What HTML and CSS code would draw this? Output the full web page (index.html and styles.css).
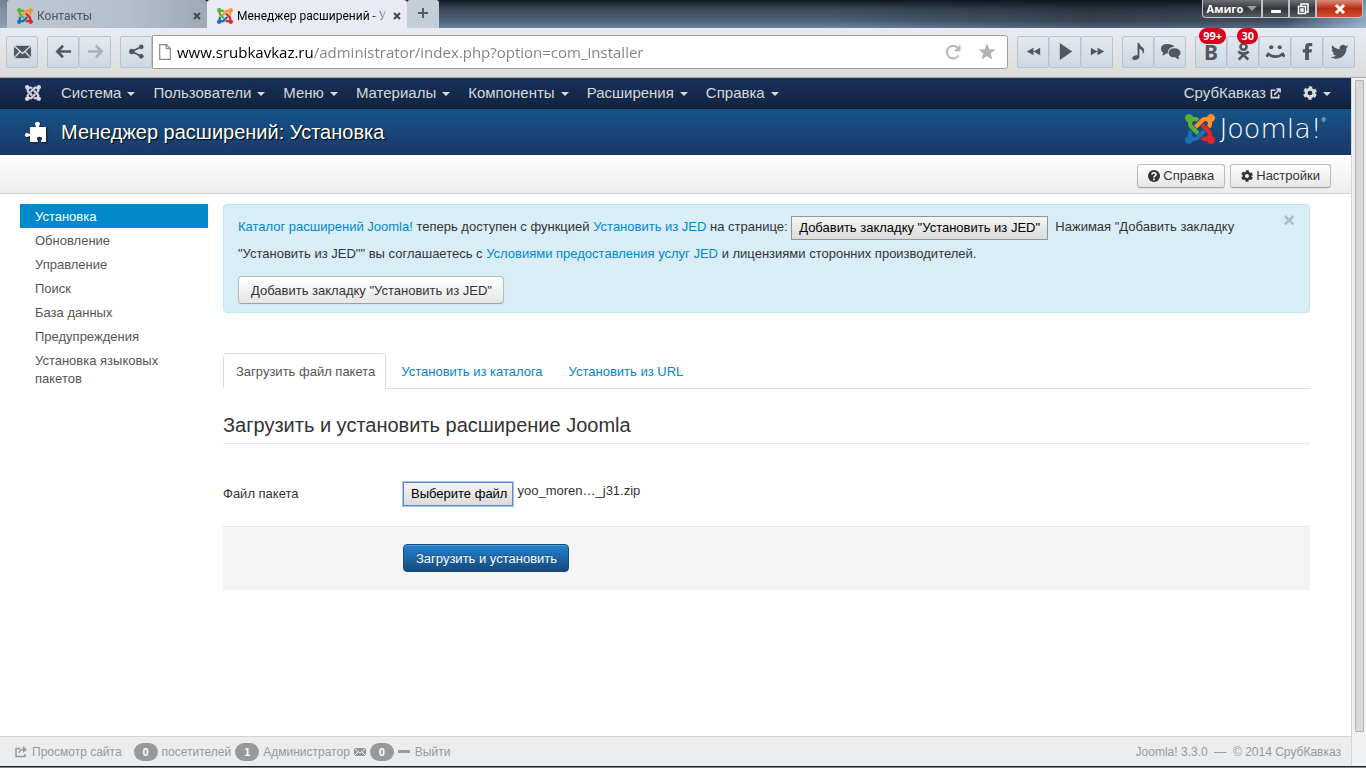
FILE: index.html
```html
<!DOCTYPE html>
<html lang="ru">
<head>
    <meta charset="UTF-8">
    <meta name="viewport" content="width=device-width, initial-scale=1.0">
    <title>Менеджер расширений - Установка</title>
    <link rel="stylesheet" href="styles.css">
</head>
<body>
    <!-- shared icons -->
    <svg class="defs" aria-hidden="true">
        <defs>
            <path id="arm" d="M16.719 14.759L14.22 17.26l-2.37 2.37-.462.466c-1.368 1.365-3.297 1.83-5.047 1.397-.327 1.424-1.604 2.49-3.13 2.49C1.438 23.983 0 22.547 0 20.772c0-1.518 1.055-2.789 2.469-3.123-.446-1.76.016-3.705 1.396-5.08l.179-.18 2.37 2.37-.184.181c-.769.779-.769 2.024 0 2.789.771.78 2.022.78 2.787 0l.465-.465 2.367-2.371 2.502-2.506z"/>
            <symbol id="joomla-color" viewBox="0 0 24 24">
                <use href="#arm" fill="#1a6fb5"/>
                <use href="#arm" fill="#e42626" transform="rotate(-90 12 12)"/>
                <use href="#arm" fill="#fd9326" transform="rotate(180 12 12)"/>
                <use href="#arm" fill="#5fb02e" transform="rotate(90 12 12)"/>
            </symbol>
            <symbol id="joomla" viewBox="0 0 24 24">
                <use href="#arm"/>
                <use href="#arm" transform="rotate(-90 12 12)"/>
                <use href="#arm" transform="rotate(180 12 12)"/>
                <use href="#arm" transform="rotate(90 12 12)"/>
            </symbol>
            <symbol id="gear" viewBox="0 0 16 16">
                <circle cx="8" cy="8" r="4.4" fill="none" stroke="currentColor" stroke-width="3.4"/>
                <circle cx="8" cy="8" r="6.6" fill="none" stroke="currentColor" stroke-width="2.4" stroke-dasharray="3.900 3.012" stroke-dashoffset="-1.500" transform="rotate(-2 8 8)"/>
            </symbol>
        </defs>
    </svg>

    <div class="titlebar">
        <div class="tabs">
            <div class="tab">
                <svg class="favicon"><use href="#joomla-color"/></svg>
                <span class="tab-title">Контакты</span>
                <button class="tab-close" aria-label="Закрыть"><svg viewBox="0 0 8 8"><path d="M1 1l6 6M7 1L1 7"/></svg></button>
            </div>
            <div class="tab tab-active">
                <svg class="favicon"><use href="#joomla-color"/></svg>
                <span class="tab-title">Менеджер расширений - У</span>
                <button class="tab-close" aria-label="Закрыть"><svg viewBox="0 0 8 8"><path d="M1 1l6 6M7 1L1 7"/></svg></button>
            </div>
            <button class="tab-new" aria-label="Новая вкладка"><svg viewBox="0 0 10 10"><path d="M5 0v10M0 5h10"/></svg></button>
        </div>
        <div class="window-buttons">
            <button class="win win-menu">Амиго <span class="win-arrow"></span></button>
            <button class="win" aria-label="Свернуть"><svg viewBox="0 0 14 14"><path d="M2 8h10v3H2z" fill="#fff"/></svg></button>
            <button class="win" aria-label="Развернуть"><svg viewBox="0 0 14 14"><path d="M5 4V2h7v8h-2M2.500 4.500h7v7h-7zM5 7h2v2H5z" fill="none" stroke="#fff" stroke-width="1.500"/></svg></button>
            <button class="win win-close" aria-label="Закрыть окно"><svg viewBox="0 0 14 14"><path d="M3 3l8 8M11 3l-8 8" stroke="#fff" stroke-width="3"/></svg></button>
        </div>
    </div>

    <div class="toolbar">
        <div class="group">
            <button class="tool" aria-label="Почта"><svg viewBox="0 0 20 20"><path d="M1 4h18v13H1z"/><path d="M1 4l9 8 9-8M1 17l6.500-7M19 17l-6.500-7" fill="none" stroke="#dfe4ec" stroke-width="1.400"/></svg></button>
        </div>
        <div class="group">
            <button class="tool" aria-label="Назад"><svg viewBox="0 0 20 20"><path d="M18 10H4M9.500 4l-6 6 6 6" class="line"/></svg></button>
            <button class="tool tool-off" aria-label="Вперёд"><svg viewBox="0 0 20 20"><path d="M2 10h14M10.500 4l6 6-6 6" class="line"/></svg></button>
        </div>
        <div class="address-group">
            <button class="tool" aria-label="Поделиться"><svg viewBox="0 0 20 20"><path d="M15 5L5 10l10 5" class="line thin"/><circle cx="15" cy="5" r="2.500"/><circle cx="5" cy="10" r="2.800"/><circle cx="15" cy="15" r="2.500"/></svg></button>
            <div class="address">
                <svg class="page-icon" viewBox="0 0 12 16"><path d="M.7.7h6.800L11.300 4.500v10.800H.7zM7.300.7v4h4" fill="#fff" stroke="#8a8a8a" stroke-width="1.200"/></svg>
                <input class="url" type="text" aria-label="Адрес" value="www.srubkavkaz.ru/administrator/index.php?option=com_installer">
                <button class="plain" aria-label="Обновить"><svg viewBox="0 0 18 18"><path d="M14.500 12.500A6.300 6.300 0 1 1 14 5" fill="none" stroke="#b7bbc0" stroke-width="2.200"/><path d="M16.500 1.500v6.700H9.800z" fill="#b7bbc0"/></svg></button>
                <button class="plain" aria-label="В закладки"><svg viewBox="0 0 18 18"><path d="M9 .5l2.300 5.700 6.200.4-4.800 4 1.600 6L9 13.200l-5.300 3.400 1.600-6L.5 6.600l6.200-.4z" fill="#aeb2b8"/></svg></button>
            </div>
        </div>
        <div class="group">
            <button class="tool" aria-label="Предыдущий"><svg viewBox="0 0 20 20"><path d="M10 6v8l-7-4zM17 6v8l-7-4z"/></svg></button>
            <button class="tool" aria-label="Играть"><svg viewBox="0 0 20 20"><path d="M4 1l13 9-13 9z"/></svg></button>
            <button class="tool" aria-label="Следующий"><svg viewBox="0 0 20 20"><path d="M3 6v8l7-4zM10 6v8l7-4z"/></svg></button>
        </div>
        <div class="group">
            <button class="tool" aria-label="Музыка"><svg viewBox="0 0 20 20"><path d="M9 1h2c0 4 5 4 5 8 0 2-1 3-2 4 1-4-1-5-3-6v8c0 3-3 4-5 4-1.500 0-3-1-2.500-2.500C4 14.500 7 13.500 9 14z"/></svg></button>
            <button class="tool" aria-label="Сообщения"><svg class="wide" viewBox="0 0 22 20"><path d="M7.500 2C3.500 2 1 4 1 7c0 2 1 3.200 2 4 0 1 0 2-1 3 2 0 3.500-1 4-2h2C8 8 11 5 15 5c-1-2-4-3-7.500-3z"/><path d="M15 6.500c-4 0-6 2-6 4.700s2 4.800 6 4.800h1c1 1.200 2.500 2 4.500 2-1-1-1.200-2-1-3 1.300-1 2-2.200 2-3.800 0-2.700-2.500-4.700-6.500-4.700z"/></svg></button>
        </div>
        <div class="group">
            <button class="tool" aria-label="ВКонтакте"><span class="letter">B</span><span class="count">99+</span></button>
            <button class="tool" aria-label="Одноклассники"><svg viewBox="0 0 20 20"><circle cx="10" cy="5" r="3.200" class="line"/><path d="M4.500 10c3 3 8 3 11 0M5 18.500l5-5 5 5" class="line"/></svg><span class="count">30</span></button>
            <button class="tool" aria-label="Мой Мир"><svg viewBox="0 0 20 20"><circle cx="5.500" cy="5.500" r="2.200"/><circle cx="14.500" cy="5.500" r="2.200"/><path d="M2 12c4 4.500 12 4.500 16 0M.5 15.500l2.500-4M19.500 15.500l-2.500-4" class="line"/></svg></button>
            <button class="tool" aria-label="Facebook"><svg viewBox="0 0 20 20"><path d="M7.500 19v-8H5V7.500h2.500V5c0-3 2-4 4.500-4h3v3.500h-2c-1 0-1.500.5-1.500 1.300v1.700h3.200L14.300 11h-2.800v8z"/></svg></button>
            <button class="tool" aria-label="Twitter"><svg viewBox="0 0 24 24"><path d="M23 5.500c-.8.400-1.600.6-2.500.7.900-.5 1.600-1.400 1.900-2.400-.8.500-1.800.9-2.800 1.100a4.500 4.500 0 0 0-7.600 4.100C8.300 8.800 5 7 2.700 4.200c-1.200 2-.6 4.600 1.400 5.900-.7 0-1.400-.2-2-.5 0 2.100 1.500 4 3.600 4.400-.7.200-1.400.2-2 .1.600 1.800 2.200 3 4.100 3.100A9 9 0 0 1 1 19c2 1.300 4.400 2 6.900 2 8.400 0 13.200-7.100 12.900-13.400.9-.6 1.600-1.300 2.200-2.100z"/></svg></button>
        </div>
    </div>

    <div class="viewport">
        <div class="page">
            <nav class="navbar">
                <a class="nav-logo" href="#" aria-label="Joomla"><svg><use href="#joomla"/></svg></a>
                <a class="caret" href="#">Система</a>
                <a class="caret" href="#">Пользователи</a>
                <a class="caret" href="#">Меню</a>
                <a class="caret" href="#">Материалы</a>
                <a class="caret" href="#">Компоненты</a>
                <a class="caret" href="#">Расширения</a>
                <a class="caret" href="#">Справка</a>
                <a class="site" href="#">СрубКавказ <svg viewBox="0 0 12 12"><path d="M6 2.500H1.500v8h8V7M4.500 7.500l6-6M7 1h4v4" fill="none" stroke="currentColor" stroke-width="1.700"/></svg></a>
                <a class="caret settings" href="#" aria-label="Настройки"><svg><use href="#gear"/></svg></a>
            </nav>

            <header class="header">
                <svg class="puzzle" viewBox="0 0 22 22"><path d="M5 6h6c0-1.500-1-2-1-3.300C10 1.500 11 1 12.500 1s2.500.5 2.500 1.700C15 4 14 4.500 14 6h7v15h-5c0-2 1-2 1-3.500 0-1-1-1.800-2.500-1.800S12 16.500 12 17.500c0 1.500 1 1.500 1 3.500H5v-6c-1.500 0-1.500 1-2.700 1S0 15.500 0 14s1-2 2.300-2S3.500 13 5 13z"/></svg>
                <h1>Менеджер расширений: Установка</h1>
                <div class="brand">
                    <svg><use href="#joomla-color"/></svg>
                    <span>Joomla!</span><sup>®</sup>
                </div>
            </header>

            <div class="subhead">
                <button class="btn btn-small"><svg viewBox="0 0 12 12"><circle cx="6" cy="6" r="6"/><path d="M4 4.500c0-2.500 4-2.300 4 0C8 6 6 5.800 6 7.400M6 8.500v1.700" fill="none" stroke="#fff" stroke-width="1.600"/></svg> Справка</button>
                <button class="btn btn-small"><svg><use href="#gear"/></svg> Настройки</button>
            </div>

            <div class="content">
                <ul class="sidebar">
                    <li><a class="active" href="#">Установка</a></li>
                    <li><a href="#">Обновление</a></li>
                    <li><a href="#">Управление</a></li>
                    <li><a href="#">Поиск</a></li>
                    <li><a href="#">База данных</a></li>
                    <li><a href="#">Предупреждения</a></li>
                    <li><a href="#">Установка языковых пакетов</a></li>
                </ul>

                <main class="main">
                    <div class="alert">
                        <button class="alert-close" aria-label="Закрыть">×</button>
                        <p><a href="#">Каталог расширений Joomla!</a> теперь доступен с функцией <a href="#">Установить из JED</a> на странице: <button class="native">Добавить закладку "Установить из JED"</button>&nbsp; Нажимая "Добавить закладку "Установить из JED"" вы соглашаетесь с <a href="#">Условиями предоставления услуг JED</a> и лицензиями сторонних производителей.</p>
                        <button class="btn">Добавить закладку "Установить из JED"</button>
                    </div>

                    <ul class="nav-tabs">
                        <li><a class="active" href="#">Загрузить файл пакета</a></li>
                        <li><a href="#">Установить из каталога</a></li>
                        <li><a href="#">Установить из URL</a></li>
                    </ul>

                    <form>
                        <h2>Загрузить и установить расширение Joomla</h2>
                        <div class="control-group">
                            <label for="package">Файл пакета</label>
                            <div class="file">
                                <input id="package" type="file">
                                <label class="native file-btn" for="package">Выберите файл</label>
                                <span>yoo_moren…_j31.zip</span>
                            </div>
                        </div>
                        <div class="form-actions">
                            <button class="btn btn-primary" type="button">Загрузить и установить</button>
                        </div>
                    </form>
                </main>
            </div>

            <footer class="status">
                <a href="#"><svg viewBox="0 0 12 12"><path d="M5 2.500H1v8h9V8M4 7c0-3 2-3.500 5-3.500" fill="none" stroke="currentColor" stroke-width="1.500"/><path d="M8 0l4 3.500L8 7z"/></svg> Просмотр сайта</a>
                <span class="badge first">0</span> посетителей
                <span class="badge">1</span> Администратор
                <svg viewBox="0 0 12 12"><path d="M0 2h12v8H0z"/><path d="M0 2l6 5 6-5M0 10l4-4M12 10L8 6" fill="none" stroke="#ececec"/></svg>
                <span class="badge">0</span>
                <a href="#"><svg viewBox="0 0 12 12"><path d="M0 4h12v3H0z"/></svg> Выйти</a>
                <span class="copyright">Joomla! 3.3.0 &nbsp;—&nbsp; © 2014 СрубКавказ</span>
            </footer>
        </div>
        <div class="scrollbar"><div class="thumb"></div></div>
    </div>
    <div class="taskbar"></div>
</body>
</html>
```
FILE: styles.css
```css
* {
    box-sizing: border-box;
}
body {
    margin: 0;
    height: 100vh;
    display: flex;
    flex-direction: column;
    overflow: hidden;
    font: 13px/18px "Liberation Sans", Arial, sans-serif;
    color: #333;
    background: #fff;
}
button {
    font: inherit;
    color: inherit;
    margin: 0;
    padding: 0;
    border: none;
    background: none;
}
a {
    color: #08c;
    text-decoration: none;
}
ul {
    list-style: none;
    margin: 0;
    padding: 0;
}
svg {
    fill: currentColor;
    flex: none;
}
.defs {
    position: absolute;
    width: 0;
    height: 0;
}

/* browser window */
.titlebar {
    flex: none;
    display: flex;
    justify-content: space-between;
    height: 28px;
    padding: 0 3px 0 7px;
    background: linear-gradient(90deg, rgba(160,175,190,.7), rgba(160,175,190,0) 8%, rgba(0,0,0,0) 60%, rgba(0,0,0,.3) 80%, rgba(0,0,0,.2) 94%, rgba(190,215,240,.6)), linear-gradient(#111a24, #3c4c5d 35%, #4e6175 75%, #6c88a8);
}
.tabs {
    display: flex;
    font: 12px/16px Roboto, "Noto Sans", sans-serif;
}
.tab {
    display: flex;
    align-items: center;
    width: 200px;
    height: 28px;
    padding: 4px 6px 0 10px;
    border-radius: 3px 3px 0 0;
    background: linear-gradient(90deg, #bfc8d2, #b2bfcd 60%, #9da8b5);
    color: #4d535c;
}
.tab-active {
    background: #e8ebf3;
    color: #000;
}
.favicon {
    width: 16px;
    height: 16px;
}
.tab-title {
    flex: 1;
    min-width: 0;
    margin: 0 4px;
    overflow: hidden;
    white-space: nowrap;
    -webkit-mask-image: linear-gradient(90deg, #000 88%, transparent);
    mask-image: linear-gradient(90deg, #000 88%, transparent);
}
.tab-close svg {
    display: block;
    width: 8px;
    height: 8px;
    stroke: #444;
    stroke-width: 2;
}
.tab-new {
    width: 32px;
    border-radius: 3px 3px 0 0;
    background: #c5cdd7;
}
.tab-new svg {
    width: 10px;
    height: 10px;
    stroke: #555c66;
    stroke-width: 2;
}
.window-buttons {
    display: flex;
    height: 18px;
}
.win {
    display: flex;
    align-items: center;
    justify-content: center;
    width: 27px;
    border: 1px solid #bfc3c8;
    border-top: none;
    background: linear-gradient(#6c7073, #33373b 50%, #555a5f);
    color: #fff;
}
.win svg {
    width: 14px;
    height: 14px;
}
.win-menu {
    width: 60px;
    gap: 4px;
    border-radius: 0 0 0 4px;
    font: bold 11px/16px "Open Sans", "Noto Sans", sans-serif;
}
.win-arrow {
    border: 5px solid transparent;
    border-top-color: #999;
    border-bottom: none;
}
.win-close {
    width: 47px;
    border-radius: 0 0 4px 0;
    background: linear-gradient(#d98b7a, #b92e13 50%, #d0502d);
}
.toolbar {
    flex: none;
    display: flex;
    align-items: center;
    gap: 9px;
    height: 50px;
    padding: 0 11px 2px 6px;
    border-bottom: 1px solid #a6a6a6;
    background: linear-gradient(#e8ebf3, #dcdcdc);
}
.group {
    display: flex;
}
.tool {
    position: relative;
    display: flex;
    align-items: center;
    justify-content: center;
    width: 32px;
    height: 32px;
    border: 1px solid #b5c5d5;
    border-radius: 2px;
    background: linear-gradient(#e5e9ef, #ced7e1);
    color: #505762;
}
.tool + .tool {
    border-left-color: #c3d0dd;
}
.tool svg {
    width: 19px;
    height: 19px;
}
.tool .wide {
    width: 23px;
}
.tool .line {
    fill: none;
    stroke: currentColor;
    stroke-width: 2.8;
}
.tool .thin {
    stroke-width: 2;
}
.tool-off {
    color: #aab0b8;
}
.letter {
    font: bold 21px/24px "Noto Sans", sans-serif;
}
.count {
    position: absolute;
    top: -9px;
    right: 0;
    height: 16px;
    padding: 0 4px;
    border-radius: 8px;
    background: #d9001b;
    color: #fff;
    font: bold 11px/16px "Open Sans", sans-serif;
}
.address-group {
    flex: 1;
    display: flex;
    align-items: center;
}
.address {
    flex: 1;
    display: flex;
    align-items: center;
    gap: 16px;
    height: 34px;
    padding: 0 11px 0 6px;
    border: 1px solid #a0a0a0;
    border-radius: 0 3px 3px 0;
    background: #fff;
}
.page-icon {
    width: 12px;
    height: 16px;
    margin-right: -10px;
}
.url {
    flex: 1;
    min-width: 0;
    padding: 0;
    border: none;
    outline: none;
    font: 15px/24px "Open Sans", "Noto Sans", sans-serif;
    /* host in black, the rest of the address in grey */
    background: linear-gradient(90deg, #000 136px, #808080 136px);
    -webkit-background-clip: text;
    background-clip: text;
    color: transparent;
}
.plain svg {
    display: block;
    width: 18px;
    height: 18px;
}
.viewport {
    flex: 1;
    min-height: 0;
    display: flex;
}
.scrollbar {
    width: 15px;
    padding: 2px 2px 0 3px;
    border-left: 1px solid #d5d5d5;
    background: #f1f1f1;
}
.thumb {
    height: 95%;
    border: 1px solid #b5b5b5;
    border-radius: 1px;
    background: #d8d8d8;
}
.taskbar {
    flex: none;
    height: 2px;
    border-top: 1px solid #1c2630;
    background: #75828f;
}

/* page */
.page {
    flex: 1;
    min-width: 0;
    display: flex;
    flex-direction: column;
}
.navbar {
    flex: none;
    display: flex;
    align-items: center;
    gap: 18px;
    height: 31px;
    padding: 0 20px 0 25px;
    border-bottom: 1px solid #0d1a2c;
    background: linear-gradient(#17305c, #13233f);
    font-size: 15px;
}
.navbar a {
    display: flex;
    align-items: center;
    color: #d9d9d9;
}
.nav-logo {
    margin-right: 2px;
}
.nav-logo svg {
    width: 16px;
    height: 16px;
}
.caret::after {
    content: "";
    margin: 2px 0 0 6px;
    border: 4px solid transparent;
    border-top-color: currentColor;
    border-bottom: none;
}
.navbar .site {
    gap: 4px;
    margin: 0 4px 0 auto;
}
.site svg {
    width: 11px;
    height: 11px;
}
.settings svg {
    width: 14px;
    height: 14px;
}
.header {
    flex: none;
    display: flex;
    align-items: center;
    height: 46px;
    padding: 0 25px;
    background: linear-gradient(#15548a, #1a3867);
    color: #fff;
}
.puzzle {
    width: 22px;
    height: 22px;
    filter: drop-shadow(1px 1px 1px rgba(0,0,0,.6));
}
h1 {
    margin: 0 auto 0 14px;
    font-size: 20px;
    font-weight: normal;
    line-height: 46px;
    text-shadow: 1px 1px 1px #000;
}
.brand {
    display: flex;
    align-items: center;
    height: 30px;
    margin-bottom: 6px;
}
.brand svg {
    width: 30px;
    height: 30px;
}
.brand span {
    margin-left: 4px;
    font: 200 27px/30px "DejaVu Sans", "DejaVu Sans Light", sans-serif;
}
.brand sup {
    align-self: flex-start;
    font-size: 6px;
    line-height: 12px;
}
.subhead {
    flex: none;
    display: flex;
    justify-content: flex-end;
    gap: 5px;
    height: 39px;
    padding: 9px 20px 0;
    border-bottom: 1px solid #d3d3d3;
    background: linear-gradient(#fff, #ededed);
}
.btn {
    display: inline-flex;
    align-items: center;
    height: 28px;
    padding: 1px 11px 0 12px;
    border: 1px solid #bbb;
    border-bottom-color: #a2a2a2;
    border-radius: 4px;
    background: linear-gradient(#fff, #e6e6e6);
    box-shadow: 0 1px 2px rgba(0,0,0,.05);
}
.btn-small {
    gap: 3px;
    height: 24px;
    padding: 0 10px;
    border-radius: 3px;
}
.btn-small svg {
    width: 12px;
    height: 12px;
}
.btn-primary {
    border-color: #15497c;
    background: linear-gradient(#2384d3, #15497c);
    box-shadow: inset 0 1px 0 rgba(255,255,255,.2);
    color: #fff;
    text-shadow: 0 -1px 0 rgba(0,0,0,.25);
}
.content {
    flex: 1;
    min-height: 0;
    display: flex;
    align-items: flex-start;
    gap: 15px;
    padding: 10px 41px 0 20px;
}
.sidebar {
    width: 188px;
}
.sidebar a {
    display: block;
    padding: 4px 15px 2px;
    color: #555;
}
.sidebar .active {
    background: #08c;
    color: #fff;
}
.main {
    flex: 1;
    min-width: 0;
}
.alert {
    position: relative;
    padding: 8px 35px 8px 14px;
    border: 1px solid #bce8f1;
    border-radius: 4px;
    background: #d9edf7;
}
.alert p {
    margin: 0 0 9px;
    line-height: 27px;
}
.alert .btn {
    vertical-align: top;
}
.alert-close {
    position: absolute;
    top: 6px;
    right: 14px;
    font-size: 20px;
    font-weight: bold;
    color: #a9bac2;
}
.native {
    height: 24px;
    padding: 0 7px;
    border: 1px solid #949494;
    background: linear-gradient(#f4f4f4, #dcdcdc);
    color: #000;
    line-height: 22px;
    vertical-align: middle;
}
.nav-tabs {
    display: flex;
    gap: 2px;
    height: 36px;
    margin-top: 40px;
    border-bottom: 1px solid #ddd;
}
.nav-tabs a {
    display: block;
    height: 36px;
    padding: 9px 10px 8px 12px;
    border: 1px solid transparent;
    border-radius: 4px 4px 0 0;
}
.nav-tabs .active {
    border-color: #ddd #ddd #fff;
    background: #fff;
    color: #555;
}
h2 {
    margin: 18px 0 38px;
    border-bottom: 1px solid #e5e5e5;
    font-size: 20px;
    font-weight: normal;
    line-height: 36px;
}
.control-group {
    display: flex;
    align-items: center;
    height: 24px;
    margin-bottom: 20px;
}
.control-group > label {
    width: 180px;
}
.file {
    display: flex;
    gap: 4px;
}
.file input {
    position: absolute;
    width: 1px;
    height: 1px;
    opacity: 0;
}
.file-btn {
    padding: 0 5px 0 7px;
    border: 1px solid #5c87cf;
    box-shadow: 0 0 0 1px #a9c4f0;
}
.form-actions {
    padding: 17px 180px 18px;
    border-top: 1px solid #e5e5e5;
    background: #f5f5f5;
}
.form-actions .btn {
    display: flex;
}
.status {
    flex: none;
    display: flex;
    align-items: center;
    gap: 4px;
    height: 30px;
    padding: 1px 10px 0 15px;
    border-top: 1px solid #d4d4d4;
    background: #ececec;
    color: #999;
    font-size: 12px;
}
.status a {
    display: flex;
    align-items: center;
    gap: 5px;
    color: #999;
}
.status svg {
    width: 12px;
    height: 12px;
}
.badge {
    width: 24px;
    border-radius: 9px;
    background: #999;
    color: #fff;
    font-size: 11px;
    font-weight: bold;
    line-height: 18px;
    text-align: center;
}
.badge.first {
    margin-left: 8px;
}
.copyright {
    margin-left: auto;
}
```
